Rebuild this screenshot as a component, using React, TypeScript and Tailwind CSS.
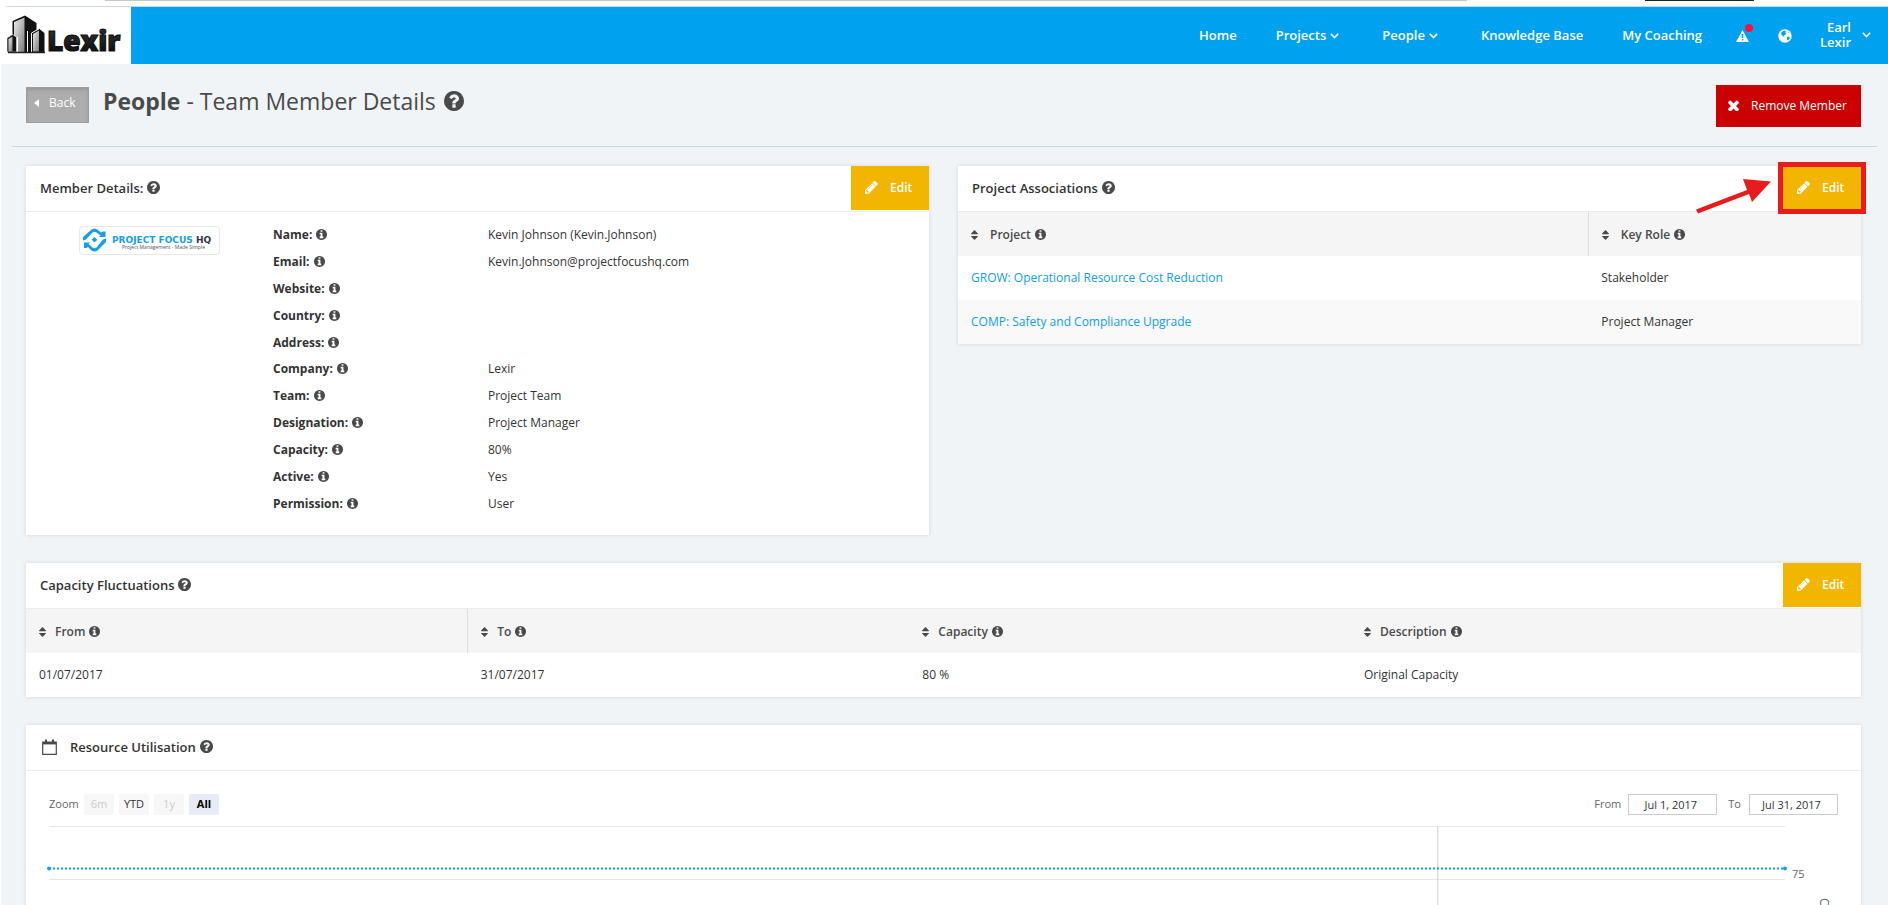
import type { ReactNode } from 'react'

const CIRCLE =
  'm640 416q0 209-103 385.5t-279.5 279.5-385.5 103-385.5-103-279.5-279.5-103-385.5 103-385.5 279.5-279.5 385.5-103 385.5 103 279.5 279.5 103 385.5z'

function Info() {
  return (
    <svg viewBox="128 128 1536 1536" className="mb-px ml-1 inline-block size-[11px] shrink-0 fill-[#4a4a4a]" aria-hidden="true">
      <path
        d={
          'M1152 1376v-160q0-14-9-23t-23-9h-96v-512q0-14-9-23t-23-9h-320q-14 0-23 9t-9 23v160q0 14 9 23t23 9h96v320h-96q-14 0-23 9t-9 23v160q0 14 9 23t23 9h448q14 0 23-9t9-23zm-128-896v-160q0-14-9-23t-23-9h-192q-14 0-23 9t-9 23v160q0 14 9 23t23 9h192q14 0 23-9t9-23z' +
          CIRCLE
        }
      />
    </svg>
  )
}

function Help({ className = 'mb-1 size-[13px]' }: { className?: string }) {
  return (
    <svg viewBox="128 128 1536 1536" className={`inline-block shrink-0 fill-[#4a4a4a] ${className}`} aria-hidden="true">
      <path d="M1024 1376v-192q0-14-9-23t-23-9h-192q-14 0-23 9t-9 23v192q0 14 9 23t23 9h192q14 0 23-9t9-23zm256-672q0-88-55.5-163t-138.5-116-170-41q-243 0-371 213-15 24 8 42l132 100q7 6 19 6 16 0 25-12 53-68 86-92 34-24 86-24 48 0 85.5 26t37.5 59q0 38-20 61t-68 45q-63 28-115.5 86.5t-52.5 125.5v36q0 14 9 23t23 9h192q14 0 23-9t9-23q0-19 21.5-49.5t54.5-49.5q32-18 49-28.5t46-35 44.5-48 28-60.5 12.5-81zm384 192q0 209-103 385.5t-279.5 279.5-385.5 103-385.5-103-279.5-279.5-103-385.5 103-385.5 279.5-279.5 385.5-103 385.5 103 279.5 279.5 103 385.5z" />
    </svg>
  )
}

function Pencil() {
  return (
    <svg viewBox="128 150 1536 1536" className="mb-[2px] size-[13px] shrink-0 fill-white" aria-hidden="true">
      <path d="M491 1536l91-91-235-235-91 91v107h128v128h107zm523-928q0-22-22-22-10 0-17 7l-542 542q-7 7-7 17 0 22 22 22 10 0 17-7l542-542q7-7 7-17zm-54-192l416 416-832 832h-416v-416zm683 96q0 53-37 90l-166 166-416-416 166-165q36-38 90-38 53 0 91 38l235 234q37 39 37 91z" />
    </svg>
  )
}

function Sort() {
  return (
    <svg viewBox="384 192 1024 1408" className="h-[10px] w-[7px] shrink-0 fill-[#4a4a4a]" aria-hidden="true">
      <path d="M1408 1088q0 26-19 45l-448 448q-19 19-45 19t-45-19l-448-448q-19-19-19-45t19-45 45-19h896q26 0 45 19t19 45zm0-384q0 26-19 45t-45 19h-896q-26 0-45-19t-19-45 19-45l448-448q19-19 45-19t45 19l448 448q19 19 19 45z" />
    </svg>
  )
}

function Chevron() {
  return (
    <svg viewBox="0 0 9 6" className="h-[6px] w-[9px] shrink-0 fill-none stroke-white" aria-hidden="true">
      <path d="M0.800 0.800l3.700 3.700 3.700-3.700" strokeWidth="1.6" />
    </svg>
  )
}

function LexirLogo() {
  return (
    <svg viewBox="0 0 130 57" className="h-[57px] w-[130px] shrink-0 bg-white" role="img" aria-label="Lexir">
      <defs>
        <linearGradient id="face" x1="0" y1="0" x2="1" y2="1">
          <stop offset="0" stopColor="#eeeeee" />
          <stop offset="1" stopColor="#7a7a7a" />
        </linearGradient>
        <linearGradient id="word" x1="0" y1="0" x2="0" y2="1">
          <stop offset="0" stopColor="#3a3d40" />
          <stop offset="1" stopColor="#050505" />
        </linearGradient>
      </defs>
      <path d="M11.500 14L24 8.500L35.500 16V45H11.500z" fill="#111" />
      <path d="M13 15l10.500-4.500V45H13z" fill="url(#face)" />
      <path d="M6 31l5.500-3.500 4 2.500v15H6z" fill="#111" stroke="#fff" strokeWidth="0.600" />
      <path d="M7.500 32l4-2.500V44.500h-4z" fill="url(#face)" />
      <path d="M30.500 26l8-4.500 5.500 4.500V45.500H30.500z" fill="#111" stroke="#fff" strokeWidth="1" />
      <path d="M32 27l6-3.500V44.500h-6z" fill="url(#face)" />
      <path d="M16.500 30v15M26.500 24v21" stroke="#fff" strokeWidth="1" />
      <path d="M7 45.500h37" stroke="#222" strokeWidth="1.500" />
      <text x="46" y="44" fontFamily="'Open Sans', sans-serif" fontSize="28" fontWeight="800" fill="url(#word)" stroke="#111" strokeWidth="1.200">
        Lexir
      </text>
    </svg>
  )
}

function CompanyLogo() {
  return (
    <svg viewBox="0 0 139 27" className="block h-[27px] w-[139px]" role="img" aria-label="Project Focus HQ">
      <path d="M3 13.500V10l8-7q3.500-3 7 0l3 2.500L23 4.500h2.500V10H19l1.500-1.500-4-3q-2-1.500-4 0L6 12.500z" fill="#14a0e8" />
      <path d="M26 11.500V15l-8 8q-3.500 3-7 0l-3-3-2 1H4v-5.500h6L8.500 17l4 3.500q2 1.500 4 0L23 12.500z" fill="#14a0e8" />
      <path d="M14.500 10l2.800 2.700-2.800 2.700-2.800-2.700z" fill="#14a0e8" />
      <text x="32" y="16" fontFamily="'DejaVu Sans', sans-serif" fontSize="9" fontWeight="700" fill="#14a0e8">
        PROJECT FOCUS <tspan fill="#34343f">HQ</tspan>
      </text>
      <text x="42" y="22" fontFamily="'Open Sans', sans-serif" fontSize="5" fill="#555">
        Project Management - Made Simple
      </text>
    </svg>
  )
}

function EditButton() {
  return (
    <button type="button" className="flex h-11 w-[78px] items-center gap-3 bg-[#f3b600] pl-[14px] text-[12px] font-semibold text-white">
      <Pencil />
      Edit
    </button>
  )
}

function Card({ title, icon, action, children }: { title: string; icon?: ReactNode; action?: ReactNode; children: ReactNode }) {
  return (
    <section className="bg-white shadow-[0_0_4px_rgba(0,0,0,0.12)]">
      <header className="flex h-[46px] items-start justify-between border-b border-[#e9ebec]">
        <div className="flex h-[46px] items-center pl-[14px]">
          {icon}
          <h2 className="flex items-center gap-1 text-[13px] font-semibold text-[#333]">
            {title}
            <Help />
          </h2>
        </div>
        {action}
      </header>
      {children}
    </section>
  )
}

function HeadCell({ label, className = '', gap = 'gap-[9px]' }: { label: string; className?: string; gap?: string }) {
  return (
    <th scope="col" className={`h-11 px-[13px] pt-[2px] text-left font-semibold text-[#4a4a4a] ${className}`}>
      <span className={`flex items-center ${gap}`}>
        <Sort />
        <span className="flex items-center">
          {label}
          <Info />
        </span>
      </span>
    </th>
  )
}

const details = [
  ['Name:', 'Kevin Johnson (Kevin.Johnson)'],
  ['Email:', 'Kevin.Johnson@projectfocushq.com'],
  ['Website:', ''],
  ['Country:', ''],
  ['Address:', ''],
  ['Company:', 'Lexir'],
  ['Team:', 'Project Team'],
  ['Designation:', 'Project Manager'],
  ['Capacity:', '80%'],
  ['Active:', 'Yes'],
  ['Permission:', 'User'],
]

const ranges = [
  { label: '6m', style: 'bg-[#f7f7f7] text-[#ccc]' },
  { label: 'YTD', style: 'bg-[#f7f7f7] text-[#333]' },
  { label: '1y', style: 'bg-[#f7f7f7] text-[#ccc]' },
  { label: 'All', style: 'bg-[#e6ebf5] font-bold text-black' },
]

export default function App() {
  return (
    <div className="flex h-screen flex-col overflow-hidden bg-white pl-px font-['Open_Sans',sans-serif] text-[12px] text-[#333]">
      <div className="flex h-[6px] shrink-0 items-start">
        <div className="ml-[5.5%] h-px w-[72.2%] bg-[#c8c8c8]" />
        <div className="ml-[9.4%] h-px w-[5.8%] bg-[#222]" />
      </div>
      <header className="flex shrink-0 rounded-tl-lg border-t border-[#cfd6da] bg-white">
        <LexirLogo />
        <nav className="flex h-[57px] grow items-center justify-end bg-[#00a2ef] pr-[17px] text-[13px] font-semibold text-white">
          <a href="#home">Home</a>
          <a href="#projects" className="ml-[39px] flex items-center gap-1">
            Projects <Chevron />
          </a>
          <a href="#people" className="ml-[43px] flex items-center gap-1">
            People <Chevron />
          </a>
          <a href="#knowledge" className="ml-[43px]">Knowledge Base</a>
          <a href="#coaching" className="ml-[39px]">My Coaching</a>
          <button type="button" aria-label="Alerts" className="relative ml-[34px]">
            <svg viewBox="0 0 13 12" className="h-3 w-[13px]">
              <path d="M6.500 0L13 12H0z" fill="#fff" />
              <path d="M5.700 4h1.600v4H5.700zM5.700 9h1.600v1.500H5.700z" fill="#00a2ef" />
            </svg>
            <span className="absolute -top-[6px] left-[9px] size-2 rounded-full bg-[#fb1240]" />
          </button>
          <button type="button" aria-label="Language" className="ml-[29px]">
            <svg viewBox="0 0 14 14" className="size-[14px]">
              <circle cx="7" cy="7" r="6.700" fill="#fff" />
              <path d="M3 4l2-2 2-.5 1 1-1 1 1.500 1L7 6 5.500 6.500 6 8 4.500 7 3.500 5.500zM9 8l2-.5 1 1.500-2 2.500-1-.5zM10 2.500l1.500 1-1 .5z" fill="#00a2ef" />
            </svg>
          </button>
          <button type="button" className="ml-7 flex items-center gap-[11px] pb-[2px]">
            <span className="text-right text-[13px] leading-[15px]">
              Earl
              <br />
              Lexir
            </span>
            <Chevron />
          </button>
        </nav>
      </header>

      <main className="grow bg-[#f0f4f7]">
        <div className="mx-[11px] flex h-[83px] items-start border-b border-[#c9d9e4]">
          <button type="button" className="mt-[23px] ml-[14px] flex h-9 w-[63px] items-center gap-[10px] border border-[#9d9d9d] bg-[#adadad] pb-1 pl-[7px] text-[12px] text-white shadow-[inset_0_2px_3px_rgba(0,0,0,0.12)]">
            <svg viewBox="0 0 5 8" className="h-2 w-[5px] fill-white" aria-hidden="true">
              <path d="M5 0v8L0 4z" />
            </svg>
            Back
          </button>
          <h1 className="mt-[21px] ml-[14px] flex items-center text-[23px] leading-8 text-[#4a4a4a]">
            <span>
              <b>People</b> - Team Member Details
            </span>
            <Help className="ml-2 size-5" />
          </h1>
          <button type="button" className="mt-[21px] mr-4 ml-auto flex h-[42px] w-[145px] items-center gap-3 bg-[#cb0000] pl-3 text-[12px] font-medium text-white">
            <svg viewBox="302 302 1188 1188" className="mb-[2px] size-[11px] fill-white" aria-hidden="true">
              <path d="M1490 1322q0 40-28 68l-136 136q-28 28-68 28t-68-28l-294-294-294 294q-28 28-68 28t-68-28l-136-136q-28-28-28-68t28-68l294-294-294-294q-28-28-28-68t28-68l136-136q28-28 68-28t68 28l294 294 294-294q28-28 68-28t68 28l136 136q28 28 28 68t-28 68l-294 294 294 294q28 28 28 68z" />
            </svg>
            Remove Member
          </button>
        </div>

        <div className="mt-[19px] mr-[27px] ml-[25px] flex flex-col gap-7">
          <div className="grid grid-cols-2 items-start gap-[29px]">
            <Card title="Member Details:" action={<EditButton />}>
              <div className="grid grid-cols-[247fr_656fr] pt-[10px] pb-[18px]">
                <div className="flex items-start justify-center pt-1">
                  <div className="rounded border border-[#e8e8e8]">
                    <CompanyLogo />
                  </div>
                </div>
                <dl className="grid h-[295px] auto-rows-fr">
                  {details.map(([label, value]) => (
                    <div key={label} className="grid grid-cols-[215fr_441fr] items-center">
                      <dt className="flex items-center font-bold">
                        {label}
                        <Info />
                      </dt>
                      <dd>{value}</dd>
                    </div>
                  ))}
                </dl>
              </div>
            </Card>

            <Card
              title="Project Associations"
              action={
                <div className="relative">
                  <EditButton />
                  <div className="pointer-events-none absolute -inset-x-[5px] -top-1 -bottom-1 border-[5px] border-[#e81c1c]" />
                  <svg viewBox="0 0 78 36" className="pointer-events-none absolute top-[12px] right-[88px] h-9 w-[78px] fill-[#e81c1c]" aria-hidden="true">
                    <path d="M1 31.500L52 12l-4-11 28 2.500L57 24l-3-8L3 35.500z" />
                  </svg>
                </div>
              }
            >
              <table className="w-full table-fixed border-collapse">
                <thead className="bg-[#f5f5f5]">
                  <tr>
                    <HeadCell label="Project" gap="gap-3" className="w-[69.8%] border-r border-[#ddd]" />
                    <HeadCell label="Key Role" gap="gap-3" />
                  </tr>
                </thead>
                <tbody>
                  <tr>
                    <td className="h-11 px-[13px]">
                      <a href="#grow" className="text-[#109ee8]">GROW: Operational Resource Cost Reduction</a>
                    </td>
                    <td className="px-[13px]">Stakeholder</td>
                  </tr>
                  <tr className="bg-[#f9f9f9]">
                    <td className="h-11 px-[13px]">
                      <a href="#comp" className="text-[#109ee8]">COMP: Safety and Compliance Upgrade</a>
                    </td>
                    <td className="px-[13px]">Project Manager</td>
                  </tr>
                </tbody>
              </table>
            </Card>
          </div>

          <Card title="Capacity Fluctuations" action={<EditButton />}>
            <table className="w-full table-fixed border-collapse">
              <thead className="bg-[#f5f5f5]">
                <tr>
                  <HeadCell label="From" className="w-[24.07%] border-r border-[#ddd]" />
                  <HeadCell label="To" className="w-[24.07%]" />
                  <HeadCell label="Capacity" className="w-[24.07%]" />
                  <HeadCell label="Description" />
                </tr>
              </thead>
              <tbody>
                <tr>
                  <td className="h-11 px-[13px]">01/07/2017</td>
                  <td className="px-[13px]">31/07/2017</td>
                  <td className="px-[13px]">80 %</td>
                  <td className="px-[13px]">Original Capacity</td>
                </tr>
              </tbody>
            </table>
          </Card>

          <Card
            title="Resource Utilisation"
            icon={
              <svg viewBox="0 0 15 16" className="mr-[13px] mb-[2px] ml-[2px] h-4 w-[15px] fill-none stroke-[#4a4a4a]" aria-hidden="true">
                <path d="M.7 3h13.600v12.300H.7z" strokeWidth="1.200" />
                <path d="M1 4.200h13" strokeWidth="2.400" />
                <path d="M4 .5v3M11 .5v3" strokeWidth="2" />
              </svg>
            }
          >
            <div className="pt-[23px] pl-[23px]">
              <div className="mr-[23px] flex h-[21px] items-center text-[11px] text-[#666]">
                <span className="w-[35px]">Zoom</span>
                <div className="flex gap-[5px]">
                  {ranges.map((r) => (
                    <button key={r.label} type="button" className={`h-[21px] w-[30px] rounded-[2px] ${r.style}`}>
                      {r.label}
                    </button>
                  ))}
                </div>
                <label htmlFor="from" className="ml-auto">From</label>
                <input id="from" defaultValue="Jul 1, 2017" className="ml-[7px] h-[21px] w-[89px] border border-[#ccc] pr-1 text-center text-[#333]" />
                <label htmlFor="to" className="ml-[11px]">To</label>
                <input id="to" defaultValue="Jul 31, 2017" className="ml-2 h-[21px] w-[89px] border border-[#ccc] pr-1 text-center text-[#333]" />
              </div>
              <div className="mt-[11px] flex h-[240px] text-[#666]">
                <svg className="h-full w-0 grow overflow-visible" role="img" aria-label="Resource utilisation">
                  <line x1="0" x2="100%" y1="0.500" y2="0.500" stroke="#e6e6e6" />
                  <line x1="0" x2="100%" y1="53.500" y2="53.500" stroke="#e6e6e6" />
                  <line x1="80%" x2="80%" y1="1" y2="240" stroke="#ccc" />
                  <line x1="0" x2="100%" y1="42.500" y2="42.500" stroke="#14a0ea" strokeWidth="2" strokeDasharray="2 2" />
                  <circle cx="0" cy="42.500" r="2" fill="#14a0ea" />
                  <circle cx="100%" cy="42.500" r="2" fill="#14a0ea" />
                </svg>
                <div className="flex w-[76px] items-start justify-between pr-[29px] pl-[7px]">
                  <span className="mt-10 text-[11px] leading-4">75</span>
                  <span className="mt-[72px] text-[12px] leading-4 [writing-mode:vertical-rl]">Capacity</span>
                </div>
              </div>
            </div>
          </Card>
        </div>
      </main>
    </div>
  )
}
